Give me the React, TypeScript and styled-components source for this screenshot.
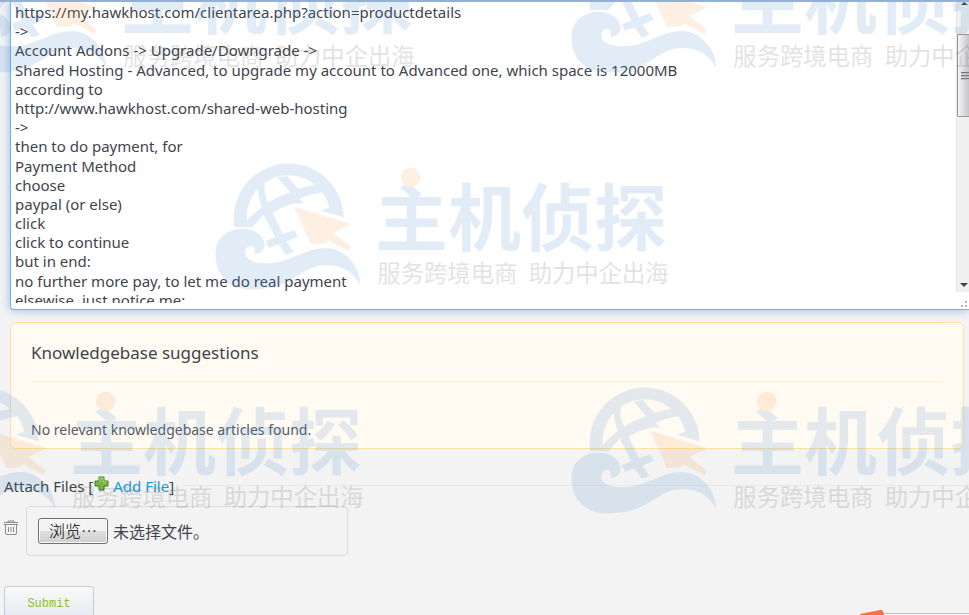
import React, { useRef, useState } from "react";
import styled, { createGlobalStyle } from "styled-components";

const GlobalStyle = createGlobalStyle`
  * { box-sizing: border-box; }
  body {
    margin: 0;
    background: #f3f3f3;
    color: #3f444c;
    font-family: "Noto Sans", "Noto Sans CJK SC", sans-serif;
    font-size: 15px;
    overflow: hidden;
  }
`;

const Page = styled.main`
  position: relative;
  height: 100vh;
  overflow: hidden;
  border-top: 2px solid #94b0d2;
`;

const Editor = styled.div`
  display: flex;
  margin-left: 10px;
  padding-bottom: 6px;
  position: relative;
  background: #fff;
  border: solid #6cb2ee;
  border-width: 0 0 1px 1px;
  border-radius: 0 0 0 4px;
  box-shadow: 0 0 10px rgba(82, 150, 220, 0.6);
`;

const Message = styled.textarea`
  flex: 1;
  height: 301px;
  padding: 1px 4px 0;
  border: 0;
  outline: 0;
  resize: none;
  overflow: hidden;
  background: transparent;
  color: inherit;
  font: inherit;
  line-height: 1.28;
`;

const ScrollTrack = styled.div`
  display: flex;
  flex-direction: column;
  align-items: center;
  width: 13px;
  height: 290px;
  overflow: hidden;
  background: #f0f0f0;
  border-left: 1px solid #e6e6e6;
`;

const ScrollThumb = styled.div`
  display: flex;
  flex-direction: column;
  justify-content: center;
  gap: 1px;
  width: 100%;
  height: 83px;
  padding-left: 3px;
  margin: 28px 0 auto;
  border: 1px solid #979797;
  border-right: 0;
  border-radius: 2px 0 0 2px;
  background: linear-gradient(90deg, #f5f5f5, #d9d9dc 60%, #c4c4ca);
`;

const GripLine = styled.i`
  height: 2px;
  background: #77787d;
  border-bottom: 1px solid #bbb;
`;

const Grip = styled.svg`
  position: absolute;
  right: 0;
  bottom: 0;
`;

const Suggestions = styled.section`
  margin: 12px 5px 0 10px;
  padding: 18px 20px 8px;
  background: #fffaf2;
  border: 1px solid #ffe0a3;
  border-radius: 6px;
`;

const SuggestionsTitle = styled.h2`
  margin: 0 0 38px;
  padding-bottom: 16px;
  border-bottom: 1px solid #ffedcc;
  font-size: 17px;
  font-weight: 400;
  line-height: 24px;
`;

const SuggestionsText = styled.p`
  margin: 0;
  font-size: 14px;
  line-height: 20px;
  color: #555a62;
`;

const AttachRow = styled.div`
  display: flex;
  align-items: center;
  margin: 25px 0 8px 4px;
  line-height: 24px;
`;

const PlusIcon = styled.svg`
  margin: 0 4px 6px 1px;
`;

const AddLink = styled.a`
  color: #1c9bcf;
  text-decoration: none;
`;

const Rule = styled.hr`
  flex: 1;
  margin: 0 0 2px 8px;
  border: 0;
  border-top: 1px solid #e6e8ea;
`;

const FileRow = styled.div`
  display: flex;
  align-items: center;
  gap: 8px;
  padding-left: 4px;
`;

const TrashButton = styled.button`
  display: flex;
  padding: 0 0 8px;
  border: 0;
  background: none;
`;

const FileBox = styled.div`
  display: flex;
  align-items: center;
  gap: 5px;
  width: 322px;
  height: 50px;
  padding: 0 11px;
  border: 1px solid #dadae0;
  border-radius: 4px;
  font: 16px/24px "Noto Sans CJK SC", sans-serif;
`;

const BrowseButton = styled.button`
  width: 70px;
  height: 26px;
  padding: 0 0 3px;
  border: 1px solid #707070;
  border-radius: 3px;
  background: linear-gradient(#f3f3f3 0 48%, #dedede 52%, #cfcfcf);
  box-shadow: inset 0 0 0 1px #fafafa;
  color: #000;
  font: 300 16px/20px "Noto Sans CJK SC", sans-serif;
`;

const SubmitButton = styled.button`
  width: 90px;
  height: 36px;
  margin: 30px 0 0 4px;
  padding: 0;
  border: 1px solid #c5cdd2;
  border-radius: 3px;
  background: linear-gradient(#f8f9fa, #e4e9ee);
  color: #8fc31f;
  font: 12px/20px "Liberation Mono", monospace;
`;

const Corner = styled.svg`
  position: absolute;
  right: 0;
  bottom: 0;
`;

const WatermarkLayer = styled.div`
  position: absolute;
  inset: 0;
  overflow: hidden;
  pointer-events: none;
`;

const Mark = styled.svg<{ $x: number; $y: number }>`
  position: absolute;
  left: ${(p) => p.$x}px;
  top: ${(p) => p.$y}px;
  opacity: 0.15;
`;

const marks = [
  { x: -54, y: -69 },
  { x: 556, y: -69 },
  { x: 200, y: 148 },
  { x: -105, y: 372 },
  { x: 556, y: 372 },
];

const message = `https://my.hawkhost.com/clientarea.php?action=productdetails
->
Account Addons -> Upgrade/Downgrade ->
Shared Hosting - Advanced, to upgrade my account to Advanced one, which space is 12000MB
according to
http://www.hawkhost.com/shared-web-hosting
->
then to do payment, for
Payment Method
choose
paypal (or else)
click
click to continue
but in end:
no further more pay, to let me do real payment
elsewise, just notice me:`;

function Watermark({ x, y }: { x: number; y: number }) {
  return (
    <Mark $x={x} $y={y} width="480" height="150" viewBox="0 0 1440 450" aria-hidden="true">
      <g fill="#4487d0">
        <path d="M103 231A165 165 0 1 1 431 202L363 182L388 172A126 126 0 0 0 140 212L155 231Z" />
        <path d="M194 288C190 303 180 310 165 312C163 302 168 290 155 287C140 287 132 302 138 318C148 338 190 345 240 335C290 322 330 293 380 294C435 296 482 350 480 405C465 370 430 346 380 345C310 345 290 400 200 415C170 420 130 420 110 412C60 390 45 350 47 310C47 262 85 236 128 236C170 236 195 262 194 288Z" />
        <path d="M155 233L140 212C195 152 270 118 356 102L380 124C360 128 325 134 298 147L312 163C290 152 240 175 218 188L249 253L283 240L293 260L259 275L281 306L257 314L236 283L206 293L198 273L226 262L191 194Z" />
        <path d="M172 107L196 99C189 120 197 143 206 160L189 180C180 162 174 130 172 107Z" />
        <path d="M233 82L262 78C272 94 292 112 305 124L278 132C260 116 247 100 233 82Z" />
        <text x="525" y="286" fontFamily="Noto Sans CJK SC, sans-serif" fontSize="219" fontWeight="700">主机侦探</text>
      </g>
      <g fill="#f29b44">
        <path d="M283 170L453 223L400 249L453 290L445 303L384 271L375 280L333 282Z" />
        <circle cx="632" cy="82" r="29" />
      </g>
      <text x="532" y="395" fill="#444" fontFamily="Noto Sans CJK SC, sans-serif" fontSize="70">
        服务跨境电商
      </text>
      <text x="986" y="395" fill="#444" fontFamily="Noto Sans CJK SC, sans-serif" fontSize="70">
        助力中企出海
      </text>
    </Mark>
  );
}

export default function App() {
  const fileInput = useRef<HTMLInputElement>(null);
  const [fileName, setFileName] = useState("未选择文件。");

  return (
    <>
      <GlobalStyle />
      <Page>
        <Editor>
          <Message aria-label="Message" defaultValue={message} spellCheck={false} wrap="off" />
          <ScrollTrack aria-hidden="true">
            <svg width="9" height="4" viewBox="0 0 9 4">
              <path d="M2 3L5 0L9 3Z" fill="#444" />
            </svg>
            <ScrollThumb>
              <GripLine />
              <GripLine />
              <GripLine />
            </ScrollThumb>
            <svg width="9" height="9" viewBox="0 0 9 9">
              <path d="M1 0H9L5 4Z" fill="#444" />
            </svg>
          </ScrollTrack>
          <Grip width="9" height="9" viewBox="0 0 9 9" aria-hidden="true">
            <path d="M5 1h2v2H5zM1 5h2v2H1zM5 5h2v2H5z" fill="#b5b5b5" />
          </Grip>
        </Editor>

        <Suggestions>
          <SuggestionsTitle>Knowledgebase suggestions</SuggestionsTitle>
          <SuggestionsText>No relevant knowledgebase articles found.</SuggestionsText>
        </Suggestions>

        <AttachRow>
          <span>Attach Files [</span>
          <PlusIcon width="15" height="15" viewBox="0 0 15 15" aria-hidden="true">
            <path d="M5 1H10V5H14V10H10V14H5V10H1V5H5Z" fill="#78b843" stroke="#3f7a1c" />
            <path d="M6 6V2H9V6H13" fill="none" stroke="#a9d97c" />
          </PlusIcon>
          <AddLink href="#add-file">Add File</AddLink>
          <span>]</span>
          <Rule />
        </AttachRow>

        <FileRow>
          <TrashButton type="button" aria-label="Remove file">
            <svg width="14" height="15" viewBox="0 0 14 15" fill="none" stroke="#8c8c8c">
              <path d="M4 2V1H10V2M0 2.5H14M0 4.5H14M1.5 5V13Q1.5 14.5 3 14.5H11Q12.5 14.5 12.5 13V5" />
              <path d="M4.500 7V12M7 7V12M9.500 7V12" />
            </svg>
          </TrashButton>
          <FileBox>
            <BrowseButton type="button" onClick={() => fileInput.current?.click()}>
              浏览⋯
            </BrowseButton>
            <input
              ref={fileInput}
              type="file"
              hidden
              aria-label="Attachment"
              onChange={(e) => setFileName(e.target.files?.[0]?.name ?? "未选择文件。")}
            />
            <span>{fileName}</span>
          </FileBox>
        </FileRow>

        <SubmitButton type="submit">Submit</SubmitButton>

        <Corner width="109" height="6" viewBox="0 0 109 6" aria-hidden="true">
          <path d="M23 4.500H109" stroke="#b3c3cf" />
          <path d="M0 5L20 1Q23 0 24 6H0Z" fill="#ff7040" />
        </Corner>

        <WatermarkLayer>
          {marks.map((m) => (
            <Watermark key={`${m.x},${m.y}`} x={m.x} y={m.y} />
          ))}
        </WatermarkLayer>
      </Page>
    </>
  );
}
